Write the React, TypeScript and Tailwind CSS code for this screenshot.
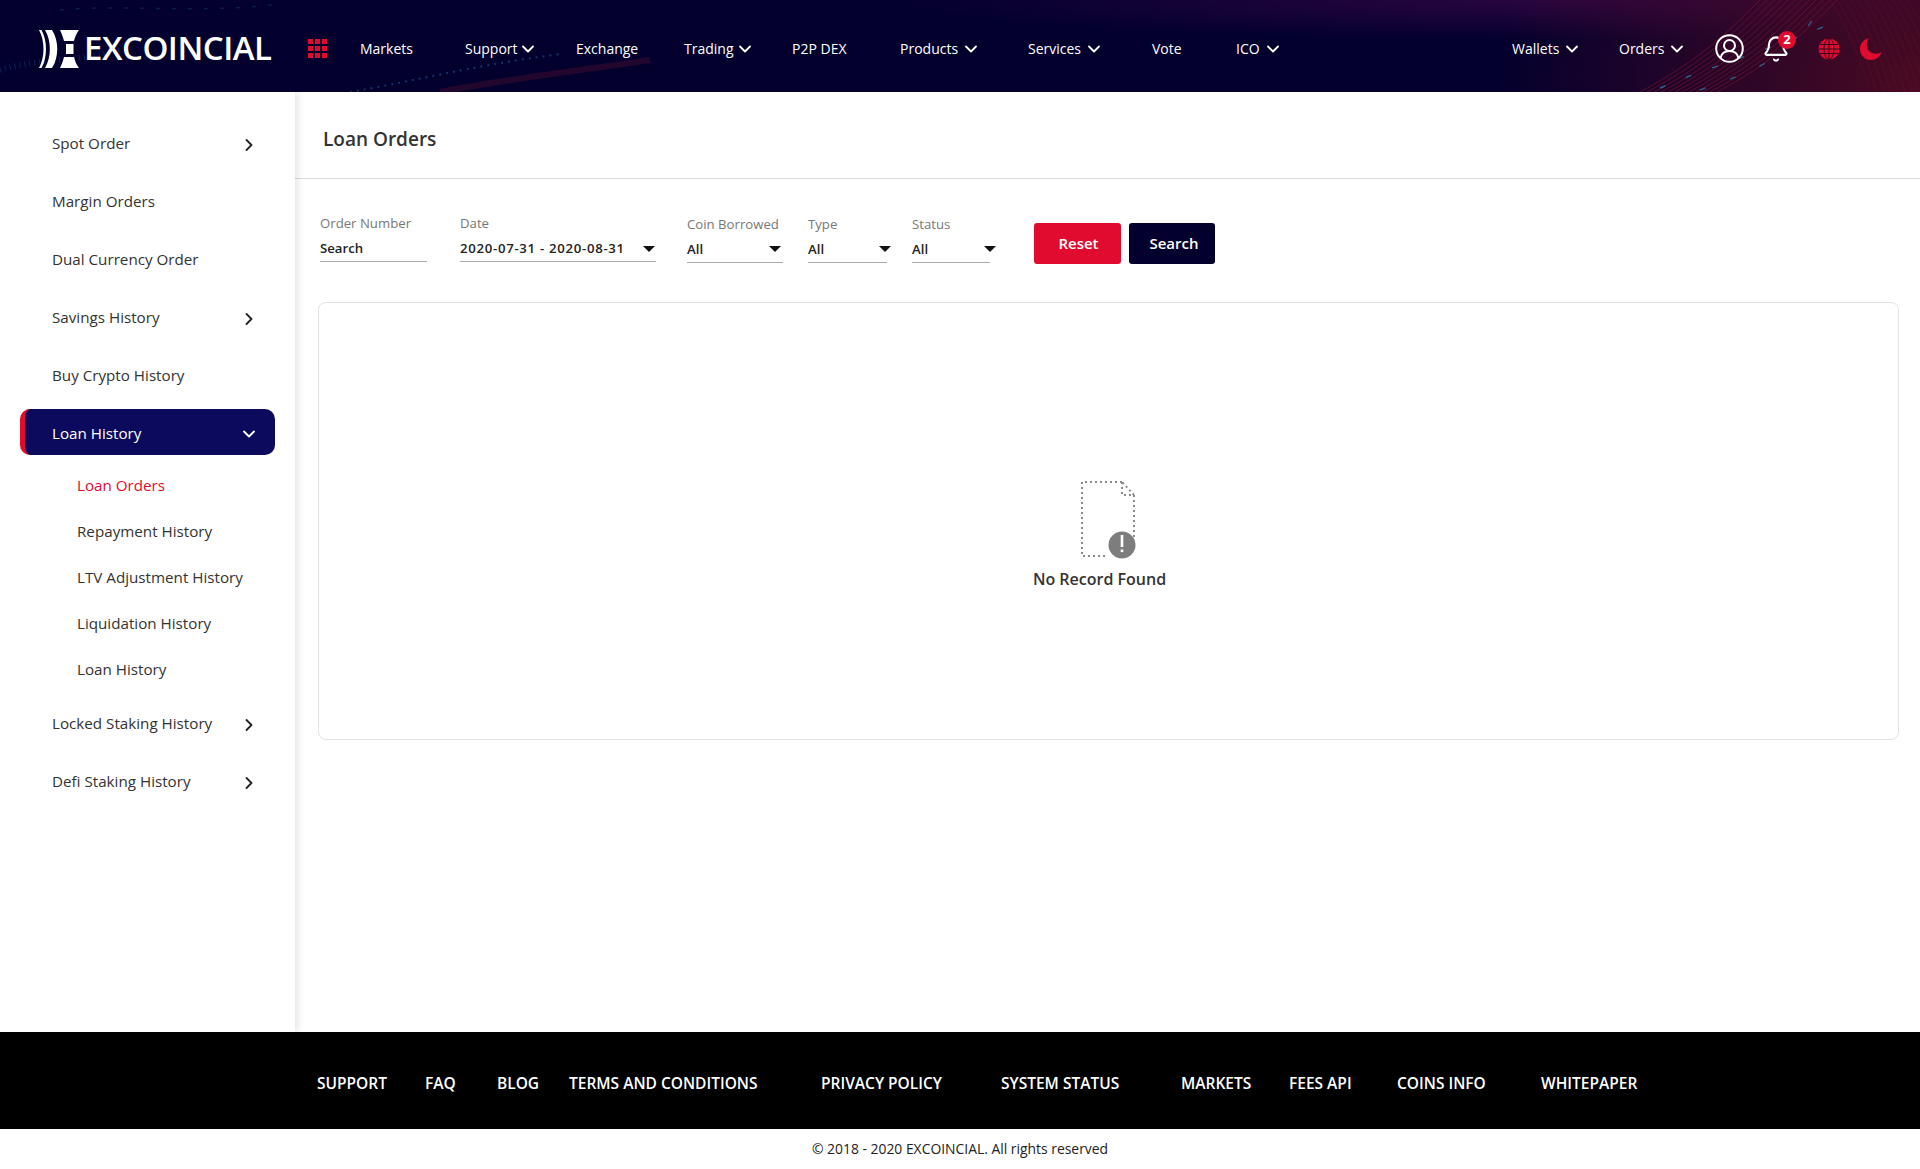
import { ChevronDown, ChevronRight, Bell } from "lucide-react";

const navLeft = [
  { label: "Markets", w: "w-[105px]" },
  { label: "Support", w: "w-[111px] gap-0", arrow: true },
  { label: "Exchange", w: "w-[108px]" },
  { label: "Trading", w: "w-[108px] gap-[1px]", arrow: true },
  { label: "P2P DEX", w: "w-[108px]" },
  { label: "Products", w: "w-[128px] gap-[3px]", arrow: true },
  { label: "Services", w: "w-[124px] gap-[3px]", arrow: true },
  { label: "Vote", w: "w-[84px]" },
  { label: "ICO", w: "w-[60px] gap-[3px]", arrow: true },
];

const footerLinks = [
  { label: "SUPPORT", w: "w-[108px]" },
  { label: "FAQ", w: "w-[72px]" },
  { label: "BLOG", w: "w-[72px]" },
  { label: "TERMS AND CONDITIONS", w: "w-[252px]" },
  { label: "PRIVACY POLICY", w: "w-[180px]" },
  { label: "SYSTEM STATUS", w: "w-[180px]" },
  { label: "MARKETS", w: "w-[108px]" },
  { label: "FEES API", w: "w-[108px]" },
  { label: "COINS INFO", w: "w-[144px]" },
  { label: "WHITEPAPER", w: "w-[120px]" },
];

const subItems = ["Repayment History", "LTV Adjustment History", "Liquidation History", "Loan History"];

function NavItem({ label, arrow, w }: { label: string; arrow?: boolean; w: string }) {
  return (
    <a className={`flex items-center text-[14px] text-white ${w}`}>
      <span>{label}</span>
      {arrow && <ChevronDown size={20} strokeWidth={2.2} className="mt-[1px]" />}
    </a>
  );
}

function SideItem({ label, arrow }: { label: string; arrow?: boolean }) {
  return (
    <a className="flex h-[46px] w-[255px] items-center justify-between pl-[32px] pr-[16px] text-[15.2px] text-[#333]">
      <span className="pt-[2px]">{label}</span>
      {arrow && <ChevronRight size={20} strokeWidth={2.2} className="mt-[6px] text-[#222]" />}
    </a>
  );
}

function Field({ label, value, w, wide }: { label: string; value: string; w: string; wide?: boolean }) {
  return (
    <div className={w}>
      <div className="text-[13.2px] leading-[18px] text-[#777]">{label}</div>
      <div className={`mt-[7px] h-[23px] border-b border-[#aaa] text-[13.2px] font-semibold leading-[18px] text-[#222] ${wide ? "tracking-[0.7px]" : ""}`}>
        {value}
      </div>
    </div>
  );
}

function HeaderArt() {
  // dotted wave and red contour lines behind the top bar
  const contours = [0, 7, 14, 21, 28, 35, 42, 49, 56, 63, 70, 77];
  return (
    <svg className="absolute inset-0 h-full w-full" viewBox="0 0 1920 92" preserveAspectRatio="none" fill="none">
      <path d="M350 92C410 82 470 66 560 54" stroke="#1d5f9a" strokeWidth="2" strokeDasharray="2 5" opacity=".55" />
      <path d="M440 92C500 80 570 72 650 60" stroke="#6a1430" strokeWidth="6" opacity=".3" />
      <path d="M0 70C40 58 80 62 120 50" stroke="#1d5f9a" strokeWidth="6" strokeDasharray="1 4" opacity=".35" />
      <path d="M60 10C120 4 200 14 280 4" stroke="#1d5f9a" strokeWidth="1.5" strokeDasharray="4 12" opacity=".3" />
      {contours.map((d) => (
        <path key={d} d={`M${1640 + d} 92C${1700 + d} 60 ${1730 + d} 30 ${1760 + d} 0`} stroke="#7a1230" strokeWidth="1" opacity=".65" />
      ))}
      {contours.map((d) => (
        <path key={d} d={`M${1830 + d} 0C${1850 + d} 30 ${1860 + d} 60 ${1870 + d} 92`} stroke="#7a1230" strokeWidth="1" opacity=".3" />
      ))}
      <path d="M1660 88C1700 70 1770 50 1840 20" stroke="#2a88b8" strokeWidth="1.500" strokeDasharray="6 22" opacity=".7" />
      <path d="M1700 90C1750 72 1790 60 1820 8" stroke="#2a88b8" strokeWidth="1.500" strokeDasharray="6 26" opacity=".6" />
    </svg>
  );
}

function Logo() {
  return (
    <svg width="41" height="38" viewBox="0 0 41 38" className="shrink-0">
      <path d="M1 0h2.500c6 11 6 27 0 38H1c6-11 6-27 0-38Z" fill="#fff" />
      <path d="M7 0h7c7 11 7 27 0 38H7c6.500-11 6.500-27 0-38Z" fill="#fff" />
      <path d="M22 0h19c-2.500 3-4 7-5 11H26c-1-4-2.500-8-4-11ZM28 14h7.500v10H28ZM26 27h10c1 4 2.500 8 5 11H22c1.500-3 3-7 4-11Z" fill="#fff" />
    </svg>
  );
}

function GridIcon() {
  return (
    <svg width="19" height="19" viewBox="0 0 19 19" fill="#e00b2f">
      {[0, 7, 14].flatMap((y) => [0, 7, 14].map((x) => <rect key={`${x}-${y}`} x={x} y={y} width="5" height="5" />))}
    </svg>
  );
}

function UserIcon() {
  return (
    <svg width="29" height="29" viewBox="0 0 29 29" fill="none" stroke="#fff" strokeWidth="2">
      <circle cx="14.500" cy="14.500" r="13.300" />
      <circle cx="14.500" cy="11.500" r="5.500" />
      <path d="M5.500 24c1-4.500 4-7 9-7s8 2.500 9 7" />
    </svg>
  );
}

function GlobeIcon() {
  return (
    <svg width="22" height="22" viewBox="0 0 22 22" fill="none">
      <circle cx="11" cy="11" r="10.500" fill="#e00b2f" />
      <g stroke="#3a0420" strokeWidth="1">
        <ellipse cx="11" cy="11" rx="5" ry="10.500" />
        <path d="M11 .5v21M2 6.500h18M.5 11h21M2 15.500h18" />
      </g>
    </svg>
  );
}

function MoonIcon() {
  return (
    <svg width="22" height="22" viewBox="0 0 22 22">
      <path d="M9 0C3.500 1.500 0 5.800 0 11c0 6.100 4.900 11 11 11 5 0 9.300-3.300 10.600-8-1.700 1.200-3.700 1.800-5.800 1.800C10 15.800 6.200 11.400 6.800 6 7 3.800 7.800 1.700 9 0Z" fill="#e00b2f" />
    </svg>
  );
}

function EmptyIcon() {
  return (
    <svg width="56" height="78" viewBox="0 0 56 78" fill="none" className="-translate-x-[1px]">
      <path d="M42 1H2v74h26M54 56V14M42 1v13h12L42 1" stroke="#8a8a8a" strokeWidth="2" strokeDasharray="2 3" />
      <circle cx="42" cy="64" r="13.500" fill="#7d7d7d" />
      <rect x="40.700" y="54" width="2.600" height="12" fill="#fff" />
      <rect x="40.700" y="68.500" width="2.600" height="2.600" fill="#fff" />
    </svg>
  );
}

export default function App() {
  return (
    <div className="flex min-h-screen flex-col bg-white font-['Open_Sans','Noto_Sans',sans-serif]">
      <header className="relative flex h-[92px] items-center overflow-hidden bg-[#04002e]">
        <div className="absolute inset-0 bg-[radial-gradient(circle_at_100%_100%,#4a0a22,transparent_22%),radial-gradient(ellipse_at_82%_0%,#2a0540,transparent_30%)]" />
        <HeaderArt />
        <div className="relative flex w-full items-center pl-[38px] pt-[5px]">
          <Logo />
          <span className="mb-[2px] ml-[5px] w-[224px] text-[33px] font-semibold leading-none tracking-[-0.5px] text-white">EXCOINCIAL</span>
          <GridIcon />
          <nav className="ml-[33px] flex items-center">
            {navLeft.map((n) => (
              <NavItem key={n.label} {...n} />
            ))}
          </nav>
          <div className="ml-[216px] flex items-center">
            <NavItem label="Wallets" arrow w="w-[107px] gap-[3px]" />
            <NavItem label="Orders" arrow w="w-[96px] gap-[3px]" />
            <UserIcon />
            <span className="relative ml-[18px] mr-[28px] flex">
              <Bell size={28} strokeWidth={1.800} className="text-white" />
              <span className="absolute -right-[6px] -top-[4px] flex h-[18px] w-[18px] items-center justify-center rounded-full bg-[#e00b2f] text-[13px] font-bold text-white">2</span>
            </span>
            <GlobeIcon />
            <span className="ml-[20px]"><MoonIcon /></span>
          </div>
        </div>
      </header>

      <div className="flex h-[940px]">
        <aside className="z-10 w-[295px] shrink-0 bg-white pl-5 pt-[27px] shadow-[3px_0_7px_rgba(0,0,0,0.1)]">
          <div className="flex flex-col gap-3">
            <SideItem label="Spot Order" arrow />
            <SideItem label="Margin Orders" />
            <SideItem label="Dual Currency Order" />
            <SideItem label="Savings History" arrow />
            <SideItem label="Buy Crypto History" />
            <a className="flex h-[46px] w-[255px] items-center justify-between rounded-[10px] border-l-[5px] border-[#e00b2f] bg-[#0c0a5c] pl-[27px] pr-[16px] text-[15.2px] text-white">
              <span className="pt-[2px]">Loan History</span>
              <ChevronDown size={20} strokeWidth={2.2} className="mt-[4px]" />
            </a>
          </div>
          <ul className="mb-[7px] mt-[7px] pl-[57px] text-[15.2px] text-[#333]">
            <li className="flex h-[46px] items-center text-[#e00b2f]">Loan Orders</li>
            {subItems.map((s) => (
              <li key={s} className="flex h-[46px] items-center">{s}</li>
            ))}
          </ul>
          <div className="flex flex-col gap-3">
            <SideItem label="Locked Staking History" arrow />
            <SideItem label="Defi Staking History" arrow />
          </div>
        </aside>

        <main className="min-w-0 flex-1">
          <div className="flex h-[87px] items-center border-b border-[#ddd] pl-[28px] pt-[8px] text-[19px] font-semibold text-[#333]">Loan Orders</div>
          <div className="flex items-start pl-[25px] pt-[35px]">
            <Field label="Order Number" value="Search" w="w-[107px]" />
            <div className="relative ml-[33px]">
              <Field label="Date" value="2020-07-31 - 2020-08-31" w="w-[196px]" wide />
              <span className="absolute right-[1px] top-[32px] h-0 w-0 border-x-[6px] border-t-[6px] border-x-transparent border-t-[#111]" />
            </div>
            <div className="relative ml-[31px] mt-[1px]">
              <Field label="Coin Borrowed" value="All" w="w-[96px]" />
              <span className="absolute right-[2px] top-[31px] h-0 w-0 border-x-[6px] border-t-[6px] border-x-transparent border-t-[#111]" />
            </div>
            <div className="relative ml-[25px] mt-[1px]">
              <Field label="Type" value="All" w="w-[79px]" />
              <span className="absolute -right-[4px] top-[31px] h-0 w-0 border-x-[6px] border-t-[6px] border-x-transparent border-t-[#111]" />
            </div>
            <div className="relative ml-[25px] mt-[1px]">
              <Field label="Status" value="All" w="w-[78px]" />
              <span className="absolute -right-[6px] top-[31px] h-0 w-0 border-x-[6px] border-t-[6px] border-x-transparent border-t-[#111]" />
            </div>
            <button className="ml-[44px] mt-[9px] h-[41px] w-[87px] rounded-[3px] bg-[#e00b2f] pl-[2px] text-[15px] font-semibold text-white">Reset</button>
            <button className="ml-2 mt-[9px] h-[41px] w-[86px] rounded-[3px] bg-[#04002e] pl-1 text-[15px] font-semibold text-white">Search</button>
          </div>
          <div className="ml-[23px] mr-[21px] mt-[38px] flex h-[438px] flex-col items-center rounded-lg border border-[#e2e2e2] pt-[178px]">
            <EmptyIcon />
            <p className="mr-[18px] mt-[8px] text-[16px] font-semibold text-[#333]">No Record Found</p>
          </div>
        </main>
      </div>

      <footer className="flex h-[97px] items-center bg-black pl-[317px] pt-[7px] text-[15.5px] font-semibold text-white">
        {footerLinks.map((f) => (
          <a key={f.label} className={f.w}>{f.label}</a>
        ))}
      </footer>
      <div className="flex h-[40px] items-center justify-center text-[13.9px] text-[#222]">© 2018 - 2020 EXCOINCIAL. All rights reserved</div>
    </div>
  );
}
